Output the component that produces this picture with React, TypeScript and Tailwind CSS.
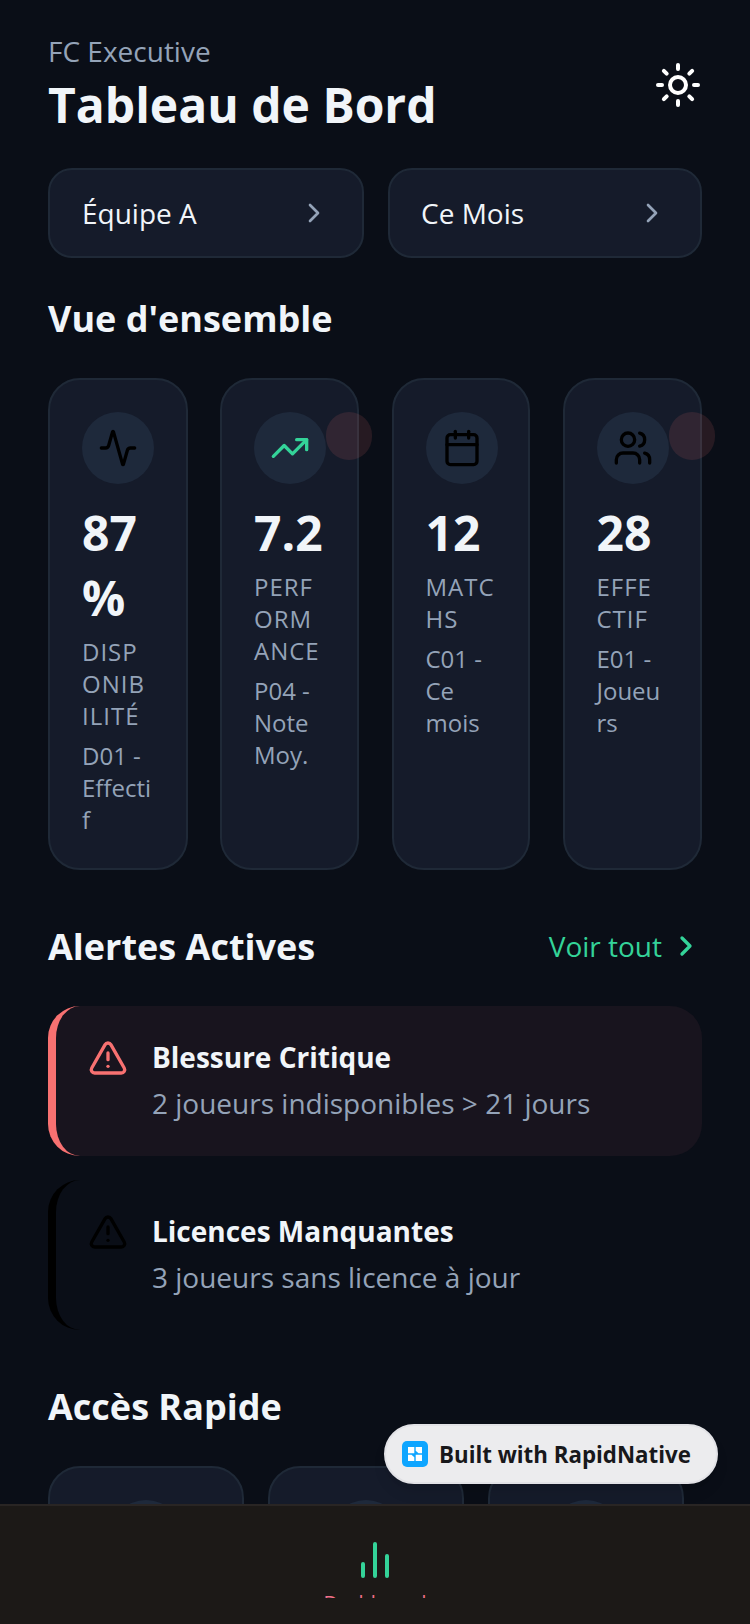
import { Activity, AlertTriangle, Calendar, ChevronRight, Sun, TrendingUp, Users } from 'lucide-react';

const stats = [
  { icon: Activity, iconColor: 'text-black', value: '87%', label: 'Disponibilité', sub: 'D01 - Effectif', pad: 'pr-[33.5px]', dot: false },
  { icon: TrendingUp, iconColor: 'text-[#34d399]', value: '7.2', label: 'Performance', sub: 'P04 - Note Moy.', pad: 'pr-8', dot: true },
  { icon: Calendar, iconColor: 'text-black', value: '12', label: 'Matchs', sub: 'C01 - Ce mois', pad: 'pr-8', dot: false },
  { icon: Users, iconColor: 'text-black', value: '28', label: 'Effectif', sub: 'E01 - Joueurs', pad: 'pr-8', dot: true },
];

const alerts = [
  {
    title: 'Blessure Critique',
    body: '2 joueurs indisponibles > 21 jours',
    box: 'border-l-[#f87171] bg-[#18141e]',
    icon: 'text-[#f87171]',
  },
  {
    title: 'Licences Manquantes',
    body: '3 joueurs sans licence à jour',
    box: 'border-l-black bg-transparent',
    icon: 'text-black',
  },
];

function Selector({ label, className }: { label: string; className: string }) {
  return (
    <button
      type="button"
      className={`flex h-[90px] items-center justify-between rounded-[24px] border-2 border-[#1f2937] bg-[#151b2a] pr-8 text-[28px] text-[#f1f5f9] ${className}`}
    >
      <span>{label}</span>
      <ChevronRight className="h-8 w-8 text-[#94a3b8]" strokeWidth={2} />
    </button>
  );
}

export default function App() {
  return (
    <div className="relative flex h-[1624px] w-[750px] flex-col overflow-hidden bg-[#0a0e17] font-['Open_Sans',sans-serif] leading-[normal]">
      <main className="min-h-0 flex-1 overflow-hidden px-12 pt-8">
        <header className="flex items-center justify-between">
          <div>
            <div className="text-[28px] leading-[38px] text-[#94a3b8]">FC Executive</div>
            <h1 className="mt-[2px] text-[48px] font-bold leading-[65px] text-[#f1f5f9]">Tableau de Bord</h1>
          </div>
          <Sun className="h-12 w-12 text-white" strokeWidth={2} />
        </header>

        <div className="mt-[31px] flex gap-6">
          <Selector label="Équipe A" className="w-[316px] pl-8" />
          <Selector label="Ce Mois" className="flex-1 pl-[31px]" />
        </div>

        <h2 className="mt-[36px] text-[36px] font-bold leading-[49px] text-[#f1f5f9]">Vue d'ensemble</h2>

        <div className="mt-[35px] grid grid-cols-[139.5px_139px_138.5px_139px] gap-x-[32.5px]">
          {stats.map((stat) => {
            const Icon = stat.icon;
            return (
              <div
                key={stat.value}
                className={`relative min-w-0 rounded-[32px] border-2 border-[#1f2937] bg-[#151b2a] p-8 [overflow-wrap:anywhere] ${stat.pad}`}
              >
                <div className="flex h-[72px] w-[72px] items-center justify-center rounded-full bg-[#1e293b]">
                  <Icon className={`h-10 w-10 ${stat.iconColor}`} strokeWidth={2} />
                </div>
                <div className="mt-4 text-[48px] font-bold leading-[65px] text-[#f1f5f9]">{stat.value}</div>
                <div className="mt-[6px] text-[24px] uppercase leading-[32px] tracking-[1px] text-[#94a3b8]">{stat.label}</div>
                <div className="mt-2 text-[24px] leading-[32px] text-[#94a3b8]">{stat.sub}</div>
                {stat.dot ? (
                  <div className="absolute -right-[15px] top-[32px] h-[48px] w-[46px] rounded-full bg-[#f87171]/12" />
                ) : null}
              </div>
            );
          })}
        </div>

        <div className="mt-[52px] flex items-center justify-between">
          <h2 className="text-[36px] font-bold leading-[49px] text-[#f1f5f9]">Alertes Actives</h2>
          <div className="flex items-center gap-2 pb-[2px] text-[28px] text-[#34d399]">
            <span>Voir tout</span>
            <ChevronRight className="h-8 w-8" strokeWidth={2.5} />
          </div>
        </div>

        <div className="mt-[35px] flex flex-col gap-6">
          {alerts.map((alert) => (
            <div key={alert.title} className={`flex h-[150px] items-start gap-6 rounded-[32px] border-l-8 pl-8 pt-8 ${alert.box}`}>
              <AlertTriangle className={`h-10 w-10 ${alert.icon}`} strokeWidth={2} />
              <div>
                <div className="text-[28px] font-bold leading-[38px] text-[#f1f5f9]">{alert.title}</div>
                <div className="mt-2 text-[28px] leading-[38px] text-[#94a3b8]">{alert.body}</div>
              </div>
            </div>
          ))}
        </div>

        <h2 className="mt-[52px] text-[36px] font-bold leading-[49px] text-[#f1f5f9]">Accès Rapide</h2>

        <div className="mt-[35px] flex gap-6">
          {[0, 1, 2].map((i) => (
            <div key={i} className="h-[200px] w-[196px] rounded-[32px] border-2 border-[#1f2937] bg-[#151b2a] p-8">
              <div className="mx-auto h-[72px] w-[72px] rounded-full bg-[#1e293b]" />
            </div>
          ))}
        </div>
      </main>

      <nav className="flex h-[120px] shrink-0 flex-col items-center border-t-2 border-[#292524] bg-[#1c1917] pt-[30px]">
        <svg viewBox="0 0 24 24" fill="none" stroke="#34d399" strokeWidth="2" strokeLinecap="round" className="h-12 w-12">
          <path d="M18 20V10M12 20V4M6 20v-6" />
        </svg>
        <div className="h-[14px] overflow-hidden pt-[5px] text-[20px] leading-[27px] text-[#f0708a]">Dashboard</div>
      </nav>

      <div className="absolute left-[384px] top-[1424px] flex h-[60px] w-[334px] items-center gap-[11px] rounded-full border-2 border-[#e2e2e6] bg-[#ececee] pl-[16px] shadow-lg">
        <svg viewBox="0 0 26 26" className="h-[26px] w-[26px]">
          <rect width="26" height="26" rx="5" fill="#0ea5ff" />
          <path d="M6 6h6.3v6.3H6zM13.7 13.7H20V20h-6.3zM13.7 6H20v6.3h-3.5l-2.8-2.5zM6 13.7h3.5l2.8 2.5V20H6z" fill="#fff" />
        </svg>
        <span className="text-[22.3px] font-bold text-[#18181b]">Built with RapidNative</span>
      </div>
    </div>
  );
}
